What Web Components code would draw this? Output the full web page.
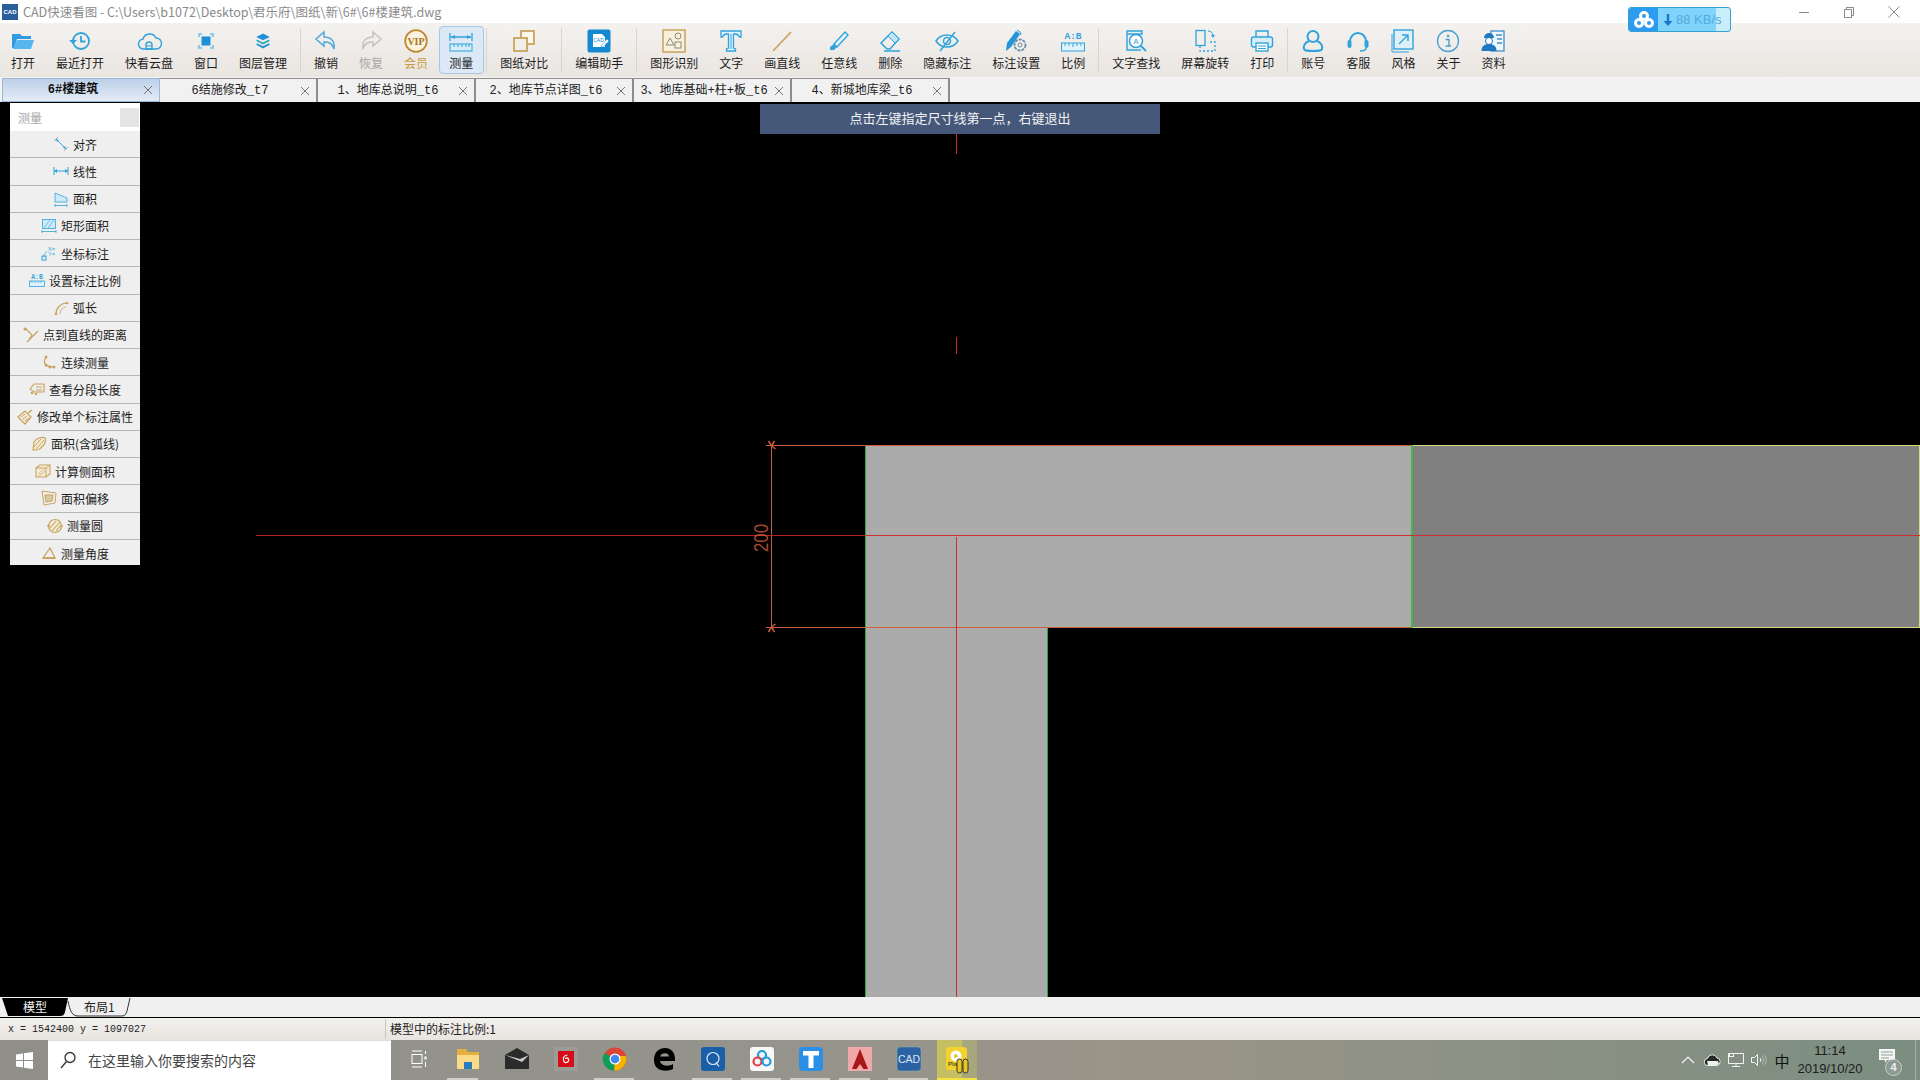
<!DOCTYPE html>
<html lang="zh">
<head>
<meta charset="utf-8">
<title>CAD快速看图</title>
<style>
  html, body { margin: 0; height: 100%; overflow: hidden; background: #000; }
  body {
    display: flex;
    flex-direction: column;
    width: 1920px;
    height: 1080px;
    font-family: "Noto Sans CJK SC", "Liberation Sans", sans-serif;
    font-size: 12px;
    color: #222;
  }
</style>
</head>
<body>
<title-bar>CAD快速看图 - C:\Users\b1072\Desktop\君乐府\图纸\新\6#\6#楼建筑.dwg</title-bar>
<speed-badge>88 KB/s</speed-badge>
<tool-bar>
  <tool-btn icon="open">打开</tool-btn>
  <tool-btn icon="recent">最近打开</tool-btn>
  <tool-btn icon="cloud">快看云盘</tool-btn>
  <tool-btn icon="fit">窗口</tool-btn>
  <tool-btn icon="layers">图层管理</tool-btn>
  <tool-sep></tool-sep>
  <tool-btn icon="undo">撤销</tool-btn>
  <tool-btn icon="redo" muted>恢复</tool-btn>
  <tool-btn icon="vip" vip>会员</tool-btn>
  <tool-btn icon="measure" active>测量</tool-btn>
  <tool-sep></tool-sep>
  <tool-btn icon="compare">图纸对比</tool-btn>
  <tool-sep></tool-sep>
  <tool-btn icon="assist">编辑助手</tool-btn>
  <tool-sep></tool-sep>
  <tool-btn icon="shapes">图形识别</tool-btn>
  <tool-btn icon="text">文字</tool-btn>
  <tool-btn icon="line">画直线</tool-btn>
  <tool-btn icon="pen">任意线</tool-btn>
  <tool-btn icon="eraser">删除</tool-btn>
  <tool-btn icon="eye">隐藏标注</tool-btn>
  <tool-btn icon="gear">标注设置</tool-btn>
  <tool-btn icon="ratio">比例</tool-btn>
  <tool-sep></tool-sep>
  <tool-btn icon="find">文字查找</tool-btn>
  <tool-btn icon="rotate">屏幕旋转</tool-btn>
  <tool-btn icon="print">打印</tool-btn>
  <tool-sep></tool-sep>
  <tool-btn icon="user">账号</tool-btn>
  <tool-btn icon="headset">客服</tool-btn>
  <tool-btn icon="style">风格</tool-btn>
  <tool-btn icon="info">关于</tool-btn>
  <tool-btn icon="worker">资料</tool-btn>
</tool-bar>
<tab-strip>
  <doc-tab active>6#楼建筑</doc-tab>
  <doc-tab>6结施修改_t7</doc-tab>
  <doc-tab>1、地库总说明_t6</doc-tab>
  <doc-tab>2、地库节点详图_t6</doc-tab>
  <doc-tab>3、地库基础+柱+板_t6</doc-tab>
  <doc-tab>4、新城地库梁_t6</doc-tab>
</tab-strip>
<cad-canvas>
  <measure-panel slot="overlay" heading="测量">
    <panel-row icon="align">对齐</panel-row>
    <panel-row icon="linear">线性</panel-row>
    <panel-row icon="area">面积</panel-row>
    <panel-row icon="rectarea">矩形面积</panel-row>
    <panel-row icon="coord">坐标标注</panel-row>
    <panel-row icon="scale">设置标注比例</panel-row>
    <panel-row icon="arc">弧长</panel-row>
    <panel-row icon="pointline">点到直线的距离</panel-row>
    <panel-row icon="chain">连续测量</panel-row>
    <panel-row icon="segment">查看分段长度</panel-row>
    <panel-row icon="edit">修改单个标注属性</panel-row>
    <panel-row icon="arcarea">面积(含弧线)</panel-row>
    <panel-row icon="side">计算侧面积</panel-row>
    <panel-row icon="offset">面积偏移</panel-row>
    <panel-row icon="circle">测量圆</panel-row>
    <panel-row icon="angle">测量角度</panel-row>
  </measure-panel>
  <hint-bar slot="overlay">点击左键指定尺寸线第一点，右键退出</hint-bar>
</cad-canvas>
<layout-tabs></layout-tabs>
<status-bar>
  <span slot="coords">x = 1542400 y = 1097027</span>
  <span slot="scale">模型中的标注比例:1</span>
</status-bar>
<task-bar>
  <task-icon icon="taskview" plain></task-icon>
  <task-icon icon="folder" running="short"></task-icon>
  <task-icon icon="mail"></task-icon>
  <task-icon icon="netease"></task-icon>
  <task-icon icon="chrome" running></task-icon>
  <task-icon icon="edge"></task-icon>
  <task-icon icon="quick" running></task-icon>
  <task-icon icon="baidu" running></task-icon>
  <task-icon icon="tapp" running></task-icon>
  <task-icon icon="acad" running="short"></task-icon>
  <task-icon icon="cadblue" running></task-icon>
  <task-icon icon="yellow" current></task-icon>
</task-bar>

<script>
const B = "#2fa3dc", T = "#c8a45e";

// toolbar icons, 24x24
const ICONS = {
  open: `<path d="M1 5h8l2 2h9v3H6l-3 9H1z" fill="#2f9be0"/><path d="M6 11h17l-3 9H2z" fill="#55b7ee"/>`,
  recent: `<circle cx="13" cy="12" r="8" fill="none" stroke="${B}" stroke-width="1.800"/><path d="M13 7v5.500h4.500" fill="none" stroke="${B}" stroke-width="1.800"/><path d="M1 11h8l-4 4z" fill="${B}"/>`,
  cloud: `<path d="M7 20a5 5 0 0 1-1-10 7 7 0 0 1 13-1 5.500 5.500 0 0 1 0 11z" fill="none" stroke="${B}" stroke-width="1.400"/><path d="M9 20v-4a3 3 0 0 1 6 0v4z" fill="none" stroke="${B}" stroke-width="1.400"/><path d="M9 17h6" stroke="${B}"/>`,
  fit: `<path d="M5 8V5h3M16 5h3v3M19 16v3h-3M8 19H5v-3" fill="none" stroke="#6fc2ee" stroke-width="1.600"/><rect x="7.500" y="7.500" width="9" height="9" fill="#1f8fd8"/>`,
  layers: `<g transform="translate(3 3) scale(.75)"><path d="M12 2l9 4.500-9 4.500-9-4.500z" fill="#1f8fd8"/><path d="M4 10l8 4 8-4 1 2-9 4.500L3 12z" fill="#26a6b8"/><path d="M4 15l8 4 8-4 1 2-9 5-9-5z" fill="#1f8fd8"/></g>`,
  undo: `<path d="M10 3L2 10l8 7v-4c5 0 8 1 10 7 1-7-2-12-10-12z" fill="none" stroke="#4fa9dc" stroke-width="1.500"/>`,
  redo: `<path d="M14 3l8 7-8 7v-4c-5 0-8 1-10 7-1-7 2-12 10-12z" fill="none" stroke="#c4c4c4" stroke-width="1.500"/>`,
  vip: `<circle cx="12" cy="12" r="10.800" fill="#fbf3df" stroke="#bd8a33" stroke-width="1.800"/><text x="12" y="15.500" text-anchor="middle" font-family="Liberation Serif" font-weight="700" font-size="10" fill="#a8741c">VIP</text>`,
  measure: `<path d="M1 4v8M23 4v8M2 8h20" stroke="${B}" stroke-width="1.300" fill="none"/><path d="M2 8l4-2v4zM22 8l-4-2v4z" fill="${B}"/><rect x="1" y="15" width="22" height="7" fill="#d6ecf8" stroke="${B}"/><path d="M5 15v3M9 15v3M13 15v3M17 15v3M20 15v3" stroke="${B}"/>`,
  compare: `<rect x="9" y="2" width="13" height="13" fill="#fdf8ec" stroke="${T}" stroke-width="1.800"/><rect x="2" y="9" width="13" height="13" fill="#f1efea" stroke="${T}" stroke-width="1.800"/>`,
  assist: `<rect x="0.500" y="0.500" width="23" height="23" rx="2" fill="#1488d0"/><path d="M6 5h9l3 3v10H6z" fill="#fff"/><text x="11.500" y="13" text-anchor="middle" font-family="Liberation Sans" font-size="5" fill="#1488d0">CAD</text><path d="M14 17l6-7 2 2-6 6z" fill="#fff" stroke="#1488d0" stroke-width=".5"/>`,
  shapes: `<rect x="1" y="1" width="22" height="22" fill="#f8f0dc" stroke="${T}" stroke-width="1.500"/><path d="M8 9l4 7H4z" fill="none" stroke="#8a8a80"/><circle cx="16" cy="7" r="3" fill="none" stroke="#8a8a80"/><rect x="13" y="13" width="6" height="6" fill="none" stroke="#8a8a80"/>`,
  text: `<path d="M2 2h20v6h-1.500c-1-2-2-3-4-3h-2v14l2 1v2H7.500v-2l2-1V5h-2c-2 0-3 1-4 3H2z" fill="#e2f3fb" stroke="${B}" stroke-width="1.300"/><path d="M12 5v15" stroke="${B}"/>`,
  line: `<path d="M3 22L21 3" stroke="${T}" stroke-width="1.800"/>`,
  pen: `<path d="M7 15L18 3l3 3L10 18z" fill="#e6f5fc" stroke="${B}" stroke-width="1.400"/><path d="M7 15l3 3-3 3H3v-3z" fill="${B}"/>`,
  eraser: `<path d="M3 14L14 3l7 7-9 10H9z" fill="none" stroke="${B}" stroke-width="1.500"/><path d="M10 7l7 7 4-4-7-7z" fill="#bfe4f6" stroke="${B}"/><path d="M6 22h16" stroke="${B}" stroke-width="1.500"/>`,
  eye: `<path d="M1 12c5-8 17-8 22 0-5 8-17 8-22 0z" fill="none" stroke="${B}" stroke-width="1.500"/><circle cx="12" cy="12" r="3.500" fill="none" stroke="${B}" stroke-width="1.500"/><path d="M5 22L20 3" stroke="${B}" stroke-width="1.500"/>`,
  gear: `<path d="M2 22l1-8L12 2l4 3-9 13z" fill="#1f96d8"/><path d="M13 1l3 2 1 3" stroke="#1f96d8" fill="none"/><circle cx="16" cy="16" r="5.500" fill="#f1efea" stroke="#6b8ea3" stroke-width="1.800" stroke-dasharray="3 1"/><circle cx="16" cy="16" r="2" fill="none" stroke="#6b8ea3"/>`,
  ratio: `<text x="12" y="10" text-anchor="middle" font-family="Liberation Mono" font-weight="700" font-size="9.500" fill="${B}">A:B</text><rect x="0.500" y="14" width="23" height="8" fill="#e2f2fa" stroke="${B}"/><path d="M4 14v3M8 14v3M12 14v4M16 14v3M20 14v3" stroke="${B}"/>`,
  find: `<path d="M3 2h15v3H3zM3 2v19h14" fill="none" stroke="${B}" stroke-width="1.400"/><circle cx="12" cy="12" r="6.500" fill="#fff" stroke="${B}" stroke-width="1.500"/><text x="12" y="15" text-anchor="middle" font-family="Liberation Sans" font-size="8" fill="${B}">A</text><path d="M17 17l5 5" stroke="${B}" stroke-width="2"/>`,
  rotate: `<rect x="3" y="1.500" width="9" height="15" fill="#f1efea" stroke="${B}" stroke-width="1.300"/><path d="M7 17v5h15v-9h-5" fill="none" stroke="${B}" stroke-width="1.300" stroke-dasharray="2 2"/><path d="M15 2c3 0 5 2 5 5" fill="none" stroke="${B}"/><path d="M18 6h4l-2 3z" fill="${B}"/>`,
  print: `<path d="M6 8V2h12v6" fill="none" stroke="${B}" stroke-width="1.400"/><rect x="1.500" y="8" width="21" height="10" rx="2" fill="#d8eef9" stroke="${B}" stroke-width="1.400"/><rect x="6" y="14" width="12" height="8" fill="#fff" stroke="${B}" stroke-width="1.400"/><path d="M8 17h8M8 19.500h8" stroke="${B}"/>`,
  user: `<circle cx="12" cy="7.500" r="5.500" fill="none" stroke="${B}" stroke-width="2"/><path d="M8 12c-4 1.500-6 5-5 8 1 2 3 2 9 2s8 0 9-2c1-3-1-6.500-5-8" fill="none" stroke="${B}" stroke-width="2"/>`,
  headset: `<path d="M4 13C4 1 20 1 20 13" fill="none" stroke="${B}" stroke-width="2"/><rect x="1.500" y="11" width="4" height="8" rx="2" fill="${B}"/><rect x="18.500" y="11" width="4" height="8" rx="2" fill="${B}"/><path d="M20 19c0 3-3 3-6 3" fill="none" stroke="${B}" stroke-width="1.500"/>`,
  style: `<rect x="3" y="1" width="19" height="19" fill="#dff0f9" stroke="${B}" stroke-width="1.400"/><path d="M8 15L17 6M11 6h6v6" fill="none" stroke="${B}" stroke-width="1.400"/><path d="M1 5v18h17" fill="none" stroke="${B}"/>`,
  info: `<circle cx="12" cy="12" r="10.500" fill="none" stroke="#4a9fd4" stroke-width="1.300"/><circle cx="12" cy="7" r="1.300" fill="#4a9fd4"/><path d="M9.500 10.500H13V17h2M9.500 17h3.500" fill="none" stroke="#4a9fd4" stroke-width="1.400"/>`,
  worker: `<rect x="10" y="2" width="13" height="20" fill="#eef7fc" stroke="#3f8fc8" stroke-width="1.300"/><path d="M15 6h6M16 10h5M16 14h5" stroke="#3f8fc8" stroke-width="1.300"/><path d="M3 9a5 5 0 0 1 10 0z" fill="#1f78c0"/><circle cx="8" cy="12" r="3.500" fill="#fff" stroke="#1f78c0"/><path d="M0.500 22c0-5 3-7 7.500-7s7.500 2 7.500 7z" fill="#1f78c0"/>`
};

// measure panel icons, 16x16
const MINI = {
  align: `<path d="M3 3l10 10" stroke="${B}"/><path d="M1 5l4-4M11 15l4-4" stroke="#888" stroke-width=".7"/><path d="M3 3l3 1-2 2zM13 13l-3-1 2-2z" fill="${B}"/>`,
  linear: `<path d="M1 4v8M15 4v8M1 8h14" stroke="${B}"/><path d="M1 8l3-2v4zM15 8l-3-2v4z" fill="${B}"/>`,
  area: `<path d="M2 2l12 5v4H2z" fill="#cfe9f6" stroke="${B}" stroke-width=".8"/><path d="M2 13v3M14 13v3M2 14.500h12" stroke="${B}" stroke-width=".8"/>`,
  rectarea: `<rect x="1.500" y="1.500" width="13" height="9" fill="#cfe9f6" stroke="${B}" stroke-width=".8"/><path d="M3 10l6-8M7 10l6-8" stroke="${B}" stroke-width=".6"/><path d="M1 12v3M15 12v3M1 13.500h14" stroke="${B}" stroke-width=".8"/>`,
  coord: `<path d="M3 12C3 8 5 8 6 6" fill="none" stroke="${B}" stroke-width=".8"/><rect x="1" y="11" width="4" height="4" fill="none" stroke="${B}"/><text x="7" y="5.500" font-family="Liberation Sans" font-size="5.500" fill="${B}">X=</text><text x="7" y="11" font-family="Liberation Sans" font-size="5.500" fill="${B}">Y=</text>`,
  scale: `<text x="8" y="6.500" text-anchor="middle" font-family="Liberation Mono" font-weight="700" font-size="6.500" fill="${B}">A:B</text><rect x="0.500" y="9" width="15" height="5.500" fill="#dff0f9" stroke="${B}" stroke-width=".8"/><path d="M3 9v2M6 9v2M9 9v2M12 9v2" stroke="${B}" stroke-width=".7"/>`,
  arc: `<path d="M3 14C3 8 8 3 14 3" fill="none" stroke="${T}" stroke-width="1.200"/><path d="M7 14C7 10 10 7 13 7" fill="none" stroke="${T}" stroke-width=".8"/><circle cx="3" cy="14" r="1.300" fill="${T}"/><circle cx="14" cy="3" r="1.300" fill="${T}"/>`,
  pointline: `<path d="M2 1l7 7M4 15L15 4M9 8l-3 5" stroke="${T}" stroke-width="1.300" fill="none"/><circle cx="2" cy="2" r="1.500" fill="${T}"/>`,
  chain: `<path d="M5 3C3 6 3 9 5 11s4 2 8 2" fill="none" stroke="${T}" stroke-width="1.200"/><circle cx="5" cy="3" r="1.500" fill="${T}"/><circle cx="5" cy="11" r="1.500" fill="${T}"/><circle cx="9" cy="13" r="1.500" fill="${T}"/><circle cx="13" cy="13" r="1.500" fill="${T}"/>`,
  segment: `<path d="M1 8l4-5h10v8H5z" fill="none" stroke="${T}" stroke-width="1.200"/><path d="M7 6h6M7 9h6" stroke="${T}"/><circle cx="3" cy="12" r="1.300" fill="${T}"/><circle cx="7" cy="13" r="1.300" fill="${T}"/>`,
  edit: `<path d="M1 8l7-6 6 6-6 7z" fill="#f4ecd8" stroke="${T}" stroke-width="1.200"/><path d="M4 8l4-3M6 10l4-3M8 12l4-3" stroke="${T}"/><path d="M11 4l4-3" stroke="${T}" stroke-width="1.500"/>`,
  arcarea: `<path d="M2 14l1-8c3-5 9-5 11-4 2 4-3 12-10 12z" fill="#f4ecd8" stroke="${T}" stroke-width="1.200"/><path d="M3 11l7-8M5 13l8-9M9 13l5-6" stroke="${T}"/>`,
  side: `<path d="M1 5l4-3h10v9l-4 3H1z" fill="#f4ecd8" stroke="${T}" stroke-width="1.100"/><path d="M1 5h10v9M11 5l4-3" fill="none" stroke="${T}"/><path d="M3 11l6-5M4 13l6-5" stroke="${T}" stroke-width=".7"/>`,
  offset: `<path d="M1 1l14 2-1 10-11 2z" fill="none" stroke="${T}"/><path d="M4 5l8 0-1 6-6 1z" fill="#dcc89c" stroke="${T}"/>`,
  circle: `<circle cx="8" cy="8" r="6.500" fill="#f4ecd8" stroke="${T}" stroke-width="1.200"/><path d="M3 10l6-7M5 13l8-9M9 13l4-5" stroke="${T}" stroke-width="1.100"/><circle cx="1.500" cy="8" r="1.300" fill="${T}"/><circle cx="14.500" cy="8" r="1.300" fill="${T}"/>`,
  angle: `<path d="M2 13L9 3l5 10z" fill="none" stroke="${T}" stroke-width="1.300"/><path d="M2 13h12" stroke="${T}" stroke-width="2"/>`
};

// taskbar icons, 24x24
const APPS = {
  taskview: `<path d="M7 4h10M7 20h10" stroke="#fff"/><rect x="7" y="7.500" width="10" height="9" fill="none" stroke="#fff"/><rect x="19.500" y="9.500" width="2" height="3" fill="#fff"/><path d="M20.500 4v3M20.500 15v5" stroke="#fff"/>`,
  folder: `<path d="M1 2h9l2 3h11v4H1z" fill="#e5b040"/><rect x="1" y="8" width="22" height="14" fill="#fbdc86"/><rect x="8" y="15" width="8" height="7" fill="#2a7bc0"/>`,
  mail: `<path d="M0 8l12-7 12 7v14H0z" fill="#2b2b2b"/><path d="M0 8l17 7 7-7-9 4z" fill="#c8c8c8"/>`,
  netease: `<rect width="24" height="24" fill="#9c9c96"/><rect x="4" y="4" width="16" height="16" fill="#d80c18"/><path d="M13.500 8c-4 0-5 4-3.500 6.500s5.500 .5 4.500-2.500c-.5-1.500-3-1.500-3 0" fill="none" stroke="#fff" stroke-width="1.200"/>`,
  chrome: `<circle cx="12" cy="12" r="11.500" fill="#db4437"/><path d="M12 12L1.500 6A11.500 11.500 0 0 0 12 23.500l6-11z" fill="#0f9d58"/><path d="M12 12l-1 11.500A11.500 11.500 0 0 0 23 9H12z" fill="#f4b400"/><circle cx="12" cy="12" r="5.500" fill="#fff"/><circle cx="12" cy="12" r="4.300" fill="#4285f4"/>`,
  edge: `<path d="M2 13C2 5 7 1 13 1c6 0 10 4 10 11v2H8c.5 5 9 6 13 3v5c-6 3-19 3-19-9zM8 9.500h9C17 5 9 5 8 9.500z" fill="#000"/>`,
  quick: `<rect width="24" height="24" rx="3" fill="#1a5ea8"/><circle cx="12" cy="11.500" r="6" fill="none" stroke="#dfeaf5" stroke-width="1.200"/><path d="M15 15.500l3 4" stroke="#dfeaf5" stroke-width="1.200"/>`,
  baidu: `<rect width="24" height="24" rx="3" fill="#f7f7f7"/><circle cx="12" cy="8" r="4" fill="none" stroke="#1e9ae0" stroke-width="2.200"/><circle cx="7.500" cy="14.500" r="4" fill="none" stroke="#e0424c" stroke-width="2.200"/><circle cx="16.500" cy="14.500" r="4" fill="none" stroke="#1e9ae0" stroke-width="2.200"/>`,
  tapp: `<rect width="24" height="24" rx="4" fill="#2b8fe8"/><path d="M4 4h16v4.500h-5.500V21h-5V8.500H4z" fill="#fff"/>`,
  acad: `<rect width="24" height="24" fill="#f0a8a8"/><path d="M12 2l8 20h-4.500L12 17l-3.500 5H4z" fill="#a81818"/>`,
  cadblue: `<rect width="24" height="24" rx="3" fill="#2c62a2" stroke="#8aa" stroke-width=".6"/><text x="12" y="16" text-anchor="middle" font-family="Liberation Sans" font-size="10.500" fill="#dce6f2">CAD</text>`,
  yellow: `<rect x="0" y="0" width="21" height="23" rx="3" fill="#f2d22c"/><circle cx="10" cy="9" r="5.500" fill="#fff"/><path d="M8.500 6.500l4 2.500-4 2.500z" fill="#e8b820"/><text x="2" y="19" font-family="Liberation Sans" font-weight="700" font-size="6" fill="#553">Pla</text><rect x="11" y="12" width="5" height="14" rx="2.500" fill="#e8c820" stroke="#333"/><rect x="17" y="12" width="5" height="14" rx="2.500" fill="#e8c820" stroke="#333"/>`
};

// shared bit: every element just stamps its template into an open root
class ShadowPart extends HTMLElement {
  connectedCallback() {
    if(!this.shadowRoot) {
      this.attachShadow({ mode: "open" });
      let t = document.createElement("template");
      t.innerHTML = this.template;
      this.shadowRoot.appendChild(t.content.cloneNode(true));
    }
  }
}

class TitleBar extends ShadowPart {
  get template() {
    return `
    <style>
      :host { display: flex; align-items: center; height: 23px; flex: none; background: #fff; color: #8a8a8a; }
      .logo { width: 16px; height: 16px; margin: 0 5px 0 2px; background: #2a5f9e; color: #fff; font: 700 6px/16px "Liberation Sans", sans-serif; text-align: center; }
      .text { flex: 1; font-size: 12.500px; white-space: nowrap; }
      .win { width: 45px; height: 23px; display: flex; justify-content: center; align-items: center; }
      svg { width: 12px; height: 12px; stroke: #8a8a8a; fill: none; }
    </style>
    <div class="logo">CAD</div>
    <div class="text"><slot></slot></div>
    <div class="win"><svg viewBox="0 0 12 12"><path d="M1 6.500h10"/></svg></div>
    <div class="win"><svg viewBox="0 0 12 12"><path d="M1.500 3.500h7v8h-7zM3.500 3.500v-2h7v8h-2"/></svg></div>
    <div class="win" style="margin-right:4px"><svg viewBox="0 0 12 12"><path d="M.5.500l11 11M11.500.500l-11 11"/></svg></div>
    `;
  }
}

// floating download meter, sits over the title bar and toolbar
class SpeedBadge extends ShadowPart {
  get template() {
    return `
    <style>
      :host { position: absolute; left: 1628px; top: 7px; width: 103px; height: 25px; z-index: 3; box-sizing: border-box; display: flex; border: 1px solid #3a9fd0; border-radius: 3px; overflow: hidden; background: #c8eefc; }
      .logo { width: 29px; background: #2d9cf0; display: flex; align-items: center; justify-content: center; }
      .fill { width: 58px; background: #7fd4fb; display: flex; align-items: center; white-space: nowrap; color: #53a8dc; font: 13px "Liberation Sans", sans-serif; }
      .arrow { width: 16px; height: 14px; margin-left: 2px; flex: none; }
      .rest { flex: 1; }
    </style>
    <div class="logo"><svg width="22" height="20" viewBox="0 0 22 20" fill="none" stroke="#fff" stroke-width="3"><circle cx="11" cy="6" r="3.500"/><circle cx="6" cy="13" r="3.500"/><circle cx="16" cy="13" r="3.500"/></svg></div>
    <div class="fill"><svg class="arrow" viewBox="0 0 16 14"><path d="M8 1v8" stroke="#1a78c8" stroke-width="2.500"/><path d="M3.500 8h9L8 13z" fill="#1a78c8"/></svg><slot></slot></div>
    <div class="rest"></div>
    `;
  }
}

class ToolBar extends ShadowPart {
  get template() {
    return `
    <style>
      :host { display: flex; height: 54px; flex: none; box-sizing: border-box; padding: 3px 0 0 .5px; background: linear-gradient(#f4f2ef, #e9e5e1); }
    </style>
    <slot></slot>
    `;
  }
}

class ToolBtn extends ShadowPart {
  get template() {
    let icon = ICONS[this.getAttribute("icon")] || "";
    return `
    <style>
      :host { display: flex; flex-direction: column; align-items: center; box-sizing: border-box; height: 48px; padding: 3px 10.500px 0; color: #1d1d1d; font-size: 12px; white-space: nowrap; }
      :host([muted]) { color: #a6a6a6; }
      :host([vip]) { color: #c99a45; }
      :host([active]) { background: #dbe8f6; outline: 1px solid #a9c6e4; outline-offset: -1px; border-radius: 4px; }
      svg { width: 24px; height: 24px; flex: none; overflow: visible; }
      span { line-height: 18px; margin-top: 1px; }
    </style>
    <svg viewBox="0 0 24 24">${icon}</svg>
    <span><slot></slot></span>
    `;
  }
}

class ToolSep extends ShadowPart {
  get template() {
    return `
    <style>
      :host { display: block; width: 6px; height: 44px; margin-top: 2px; flex: none; }
      div { width: 1px; height: 100%; margin-left: 2.500px; background: #d8d5d1; }
    </style>
    <div></div>
    `;
  }
}

class TabStrip extends ShadowPart {
  get template() {
    return `
    <style>
      :host { display: flex; height: 26px; flex: none; box-sizing: border-box; padding: 1px 0 0 2px; background: #f2f2f2; border-bottom: 1px solid #000; }
    </style>
    <slot></slot>
    `;
  }
}

class DocTab extends ShadowPart {
  get template() {
    return `
    <style>
      :host { display: flex; align-items: center; width: 158px; box-sizing: border-box; background: #f1f1f1; border: 1px solid #8c8c8c; border-left-width: 0; border-bottom-width: 0; border-right-width: 2px; font: 12px "Liberation Mono", "Noto Sans CJK SC", monospace; color: #222; white-space: nowrap; }
      :host([active]) { background: linear-gradient(#bcd0e8, #e4ecf6); border: 1px solid #9db7d6; font-weight: 700; color: #111; }
      .label { flex: 1; text-align: center; line-height: 22px; }
      svg { width: 10px; height: 10px; margin-right: 6px; stroke: #777; fill: none; flex: none; }
    </style>
    <span class="label"><slot></slot></span>
    <svg viewBox="0 0 10 10"><path d="M1 1l8 8M9 1L1 9"/></svg>
    `;
  }
}

// drawing area, coordinates in the svg are page pixels
class CadCanvas extends ShadowPart {
  get template() {
    const dim = "#cc5c3a";
    return `
    <style>
      :host { display: block; position: relative; height: 894px; flex: none; background: #000; overflow: hidden; }
      svg { position: absolute; left: 0; top: 0; }
    </style>
    <svg width="1920" height="894" viewBox="0 103 1920 894" shape-rendering="crispEdges">
      <rect x="865" y="445" width="546" height="182" fill="#ababab"/>
      <rect x="865" y="627" width="182" height="370" fill="#ababab"/>
      <rect x="1411" y="445" width="509" height="182" fill="#808080"/>
      <path d="M1411 445.500H1919M1411 627.500H1919M1919.500 445V628" stroke="#d8d880"/>
      <path d="M865.500 445V997M1047.500 628V997" stroke="#2fa83a"/>
      <path d="M1411.500 445V628" stroke="#46b846" stroke-width="2"/>
      <path d="M766 445.500H1411M766 627.500H1411" stroke="${dim}"/>
      <path d="M771.500 445V628" stroke="${dim}"/>
      <path d="M865 535.500H1920" stroke="#cc3030"/>
      <path d="M256 535.500H865" stroke="#b82222"/>
      <path d="M956.500 537V997M956.500 134V154M956.500 337V354" stroke="#cc2c2c"/>
      <g shape-rendering="auto" stroke="${dim}" stroke-width="1.500" fill="none">
        <path d="M771.500 446l-3-5M771.500 446l3-5M771.500 446l4 3M771.500 627l-3 5M771.500 627l3 5M771.500 627l4-3"/>
      </g>
      <text transform="translate(768 552) rotate(-90)" font-family="Liberation Sans" font-size="20" textLength="28" lengthAdjust="spacingAndGlyphs" fill="${dim}" fill-opacity=".8" shape-rendering="auto">200</text>
    </svg>
    <slot name="overlay"></slot>
    `;
  }
}

class MeasurePanel extends ShadowPart {
  get template() {
    return `
    <style>
      :host { display: block; position: absolute; left: 10px; top: 0; width: 130px; height: 462px; overflow: hidden; z-index: 2; background: #efefef; }
      .head { height: 28px; box-sizing: border-box; background: #fff; display: flex; align-items: center; justify-content: space-between; padding: 0 1px 0 8px; color: #a8a8a8; font-size: 12px; }
      .pin { width: 19px; height: 19px; background: #e4e4e4; }
    </style>
    <div class="head">${this.getAttribute("heading")}<div class="pin"></div></div>
    <slot></slot>
    `;
  }
}

class PanelRow extends ShadowPart {
  get template() {
    return `
    <style>
      :host { display: flex; height: 27.250px; box-sizing: border-box; align-items: center; justify-content: center; gap: 4px; border-bottom: 1px solid #b6b6b6; color: #1c1c1c; font-size: 12px; white-space: nowrap; }
      :host(:last-child) { border-bottom: 0; }
      svg { width: 16px; height: 16px; flex: none; }
    </style>
    <svg viewBox="0 0 16 16">${MINI[this.getAttribute("icon")] || ""}</svg>
    <span><slot></slot></span>
    `;
  }
}

class HintBar extends ShadowPart {
  get template() {
    return `
    <style>
      :host { display: flex; position: absolute; left: 760px; top: 1px; width: 400px; height: 30px; box-sizing: border-box; padding-bottom: 3px; z-index: 2; align-items: center; justify-content: center; background: #45587a; color: #f2f2f2; font-size: 13px; }
    </style>
    <slot></slot>
    `;
  }
}

class LayoutTabs extends ShadowPart {
  get template() {
    return `
    <style>
      :host { display: block; height: 21px; flex: none; box-sizing: border-box; background: #f0f0f0; border-bottom: 1px solid #000; }
      svg { display: block; }
      text { font: 12px "Noto Sans CJK SC", sans-serif; }
    </style>
    <svg width="140" height="20" viewBox="0 0 140 20">
      <path d="M2 1l6 18h52c3 0 4-1 5-4l3-14z" fill="#000"/>
      <path d="M68 4c2 10 4 15 10 15h44c3 0 4-2 5-5l3-13" fill="none" stroke="#333"/>
      <text x="23" y="15" fill="#f4f4f4">模型</text>
      <text x="84" y="15" fill="#222">布局1</text>
    </svg>
    `;
  }
}

class StatusBar extends ShadowPart {
  get template() {
    return `
    <style>
      :host { display: flex; align-items: center; height: 22px; flex: none; background: linear-gradient(#f3f1ee, #e8e4df); color: #222; }
      .coords { width: 377px; padding-left: 8px; font: 10px "Liberation Mono", monospace; }
      .scale { border-left: 1px solid #c8c4bf; padding-left: 4px; font-size: 12px; line-height: 20px; }
    </style>
    <div class="coords"><slot name="coords"></slot></div>
    <div class="scale"><slot name="scale"></slot></div>
    `;
  }
}

class TaskBar extends ShadowPart {
  get template() {
    return `
    <style>
      :host { display: flex; height: 40px; flex: none; align-items: stretch; background: linear-gradient(90deg, #8f8e88 0%, #95948c 40%, #9a9488 60%, #8a9184 80%, #7b8e80 100%); }
      .start { width: 48px; display: flex; align-items: center; justify-content: center; }
      .search { width: 343px; background: #fff; box-sizing: border-box; display: flex; align-items: center; padding: 0 0 2px 12px; gap: 12px; color: #444; font-size: 14px; border-top: 1px solid #ddd; }
      .apps { display: flex; flex: 1; padding-left: .5px; }
      .tray { display: flex; align-items: center; position: relative; width: 272px; color: #222; }
      .tray svg { flex: none; }
      .ime { font-size: 15px; color: #111; width: 22px; text-align: center; margin-left: 3.500px; flex: none; }
      .clock { width: 70px; flex: none; margin-left: 2px; text-align: center; white-space: nowrap; font: 13px/18px "Liberation Sans", sans-serif; color: #1c1c1c; }
      .badge { position: absolute; right: 18px; top: 19px; width: 15px; height: 15px; border-radius: 50%; background: #8d9c90; border: 1.500px solid #ccc; color: #eee; font: 700 11px/15px "Liberation Sans", sans-serif; text-align: center; }
      .edge { position: absolute; right: 4px; top: 0; width: 1px; height: 40px; background: #a4b0a6; }
    </style>
    <div class="start">
      <svg width="17" height="17" viewBox="0 0 17 17" fill="#fff"><path d="M0 2.500l7-1v6.500H0zM8 1.300L17 0v8H8zM0 9h7v6.500l-7-1zM8 9h9v8l-9-1.300z"/></svg>
    </div>
    <div class="search">
      <svg width="16" height="18" viewBox="0 0 16 18" fill="none" stroke="#333" stroke-width="1.300"><circle cx="10" cy="6.500" r="5"/><path d="M6.500 10.500L1 17"/></svg>
      <span>在这里输入你要搜索的内容</span>
    </div>
    <div class="apps"><slot></slot></div>
    <div class="tray">
      <svg style="margin-left:33px" width="14" height="10" viewBox="0 0 14 10" fill="none" stroke="#f4f4f4" stroke-width="1.200"><path d="M1 8l6-6 6 6"/></svg>
      <svg style="margin-left:8.500px" width="17" height="12" viewBox="0 0 17 12"><path d="M4 11.500a3.500 3.500 0 0 1-.5-7 5 5 0 0 1 9.500-.5 3.800 3.800 0 0 1 0 7.500z" fill="#1f2a24" stroke="#eee"/><path d="M3 7h11l1 3-2 1H4z" fill="#eee"/></svg>
      <svg style="margin-left:7px" width="17" height="16" viewBox="0 0 17 16" fill="none" stroke="#f4f4f4"><path d="M.5 1.500h15v10h-15zM8 11.500v3M4 14.500h8"/><rect x="1.500" y="1.500" width="4" height="3"/></svg>
      <svg style="margin-left:6px" width="17" height="14" viewBox="0 0 17 14" fill="none" stroke="#f4f4f4"><path d="M.5 4.500h3l3-3v11l-3-3h-3z"/><path d="M9 5c1 1 1 3 0 4" /><path d="M11 3c2 2 2 6 0 8M13 1.500c3 3 3 8 0 11" stroke="#b4bdb4"/></svg>
      <div class="ime">中</div>
      <div class="clock"><div>11:14</div><div>2019/10/20</div></div>
      <svg style="margin-left:14px;margin-top:-9px" width="16" height="14" viewBox="0 0 16 14" fill="#f6f6f6"><path d="M0 0h16v11H8l-2 3v-3H0z"/><path d="M2 3h12M2 6h12M2 9h8" stroke="#8f9c90"/></svg>
      <div class="badge">4</div>
      <div class="edge"></div>
    </div>
    `;
  }
}

class TaskIcon extends ShadowPart {
  get template() {
    const bar = "linear-gradient(#cfcfc8, #cfcfc8)";
    return `
    <style>
      :host { display: flex; width: 49px; align-items: center; justify-content: center; box-sizing: border-box; flex: none; padding-bottom: 2px; }
      :host([plain]) { width: 51.500px; }
      :host([running]) { background: ${bar} 4px 100% / 40px 2px no-repeat; }
      :host([running="short"]) { background: ${bar} 4px 100% / 31px 2px no-repeat; }
      :host([current]) { background: linear-gradient(#f2e23c, #f2e23c) 4px 100% / 40px 2px no-repeat, linear-gradient(90deg, #c6be62 25px, #a8a67c 25px) 4px 0 / 40px 100% no-repeat; }
      svg { width: 24px; height: 24px; overflow: visible; }
    </style>
    <svg viewBox="0 0 24 24">${APPS[this.getAttribute("icon")] || ""}</svg>
    `;
  }
}

// Register the custom elements
customElements.define("title-bar", TitleBar);
customElements.define("speed-badge", SpeedBadge);
customElements.define("tool-bar", ToolBar);
customElements.define("tool-btn", ToolBtn);
customElements.define("tool-sep", ToolSep);
customElements.define("tab-strip", TabStrip);
customElements.define("doc-tab", DocTab);
customElements.define("cad-canvas", CadCanvas);
customElements.define("measure-panel", MeasurePanel);
customElements.define("panel-row", PanelRow);
customElements.define("hint-bar", HintBar);
customElements.define("layout-tabs", LayoutTabs);
customElements.define("status-bar", StatusBar);
customElements.define("task-bar", TaskBar);
customElements.define("task-icon", TaskIcon);
</script>
</body>
</html>
